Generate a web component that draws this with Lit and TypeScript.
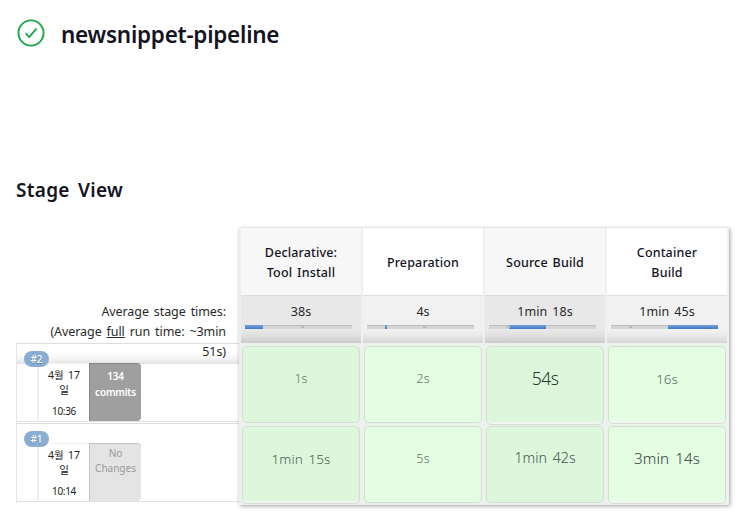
import { LitElement, html, css } from "lit";
import { customElement, property } from "lit/decorators.js";

interface Cell { text: string; size: number; ink: string; dy: number; ls: number; tall?: number }
interface Stage { name: string[]; avg: string; start: number; width: number; tick: number }
interface Run { id: string; time: string; changes: string[]; none?: boolean; cells: Cell[] }

const stages: Stage[] = [
  { name: ["Declarative:", "Tool Install"], avg: "38s", start: 0, width: 18, tick: 56 },
  { name: ["Preparation"], avg: "4s", start: 18, width: 2, tick: 56 },
  { name: ["Source Build"], avg: "1min 18s", start: 20, width: 37, tick: 18 },
  { name: ["Container", "Build"], avg: "1min 45s", start: 57, width: 50, tick: 18 },
];

const runs: Run[] = [
  {
    id: "#2", time: "10:36", changes: ["134", "commits"],
    cells: [
      { text: "1s", size: 12.5, ink: "#5d7160", dy: 0, ls: 0 },
      { text: "2s", size: 12.5, ink: "#5d7160", dy: 0, ls: 0.2 },
      { text: "54s", size: 17.5, ink: "#2c352f", dy: -1, ls: -0.5, tall: 2 },
      { text: "16s", size: 13.5, ink: "#586c5b", dy: 0, ls: 0, tall: 1 },
    ],
  },
  {
    id: "#1", time: "10:14", changes: ["No", "Changes"], none: true,
    cells: [
      { text: "1min 15s", size: 13.5, ink: "#4a5b4d", dy: 0, ls: 0.1, tall: 1 },
      { text: "5s", size: 12.5, ink: "#5d7160", dy: 0, ls: 0.2 },
      { text: "1min 42s", size: 14.2, ink: "#435446", dy: -1, ls: 0 },
      { text: "3min 14s", size: 15.2, ink: "#303c33", dy: -1, ls: 0.1, tall: 1 },
    ],
  },
];

@customElement("status-icon")
class StatusIcon extends LitElement {
  static styles = css`:host { display: block; width: 28px; height: 28px } svg { display: block }`;
  render() {
    return html`<svg width="28" height="28" viewBox="0 0 28 28" fill="none" stroke="#1ea64b" stroke-width="1.9" stroke-linecap="round" stroke-linejoin="round">
      <circle cx="14" cy="14" r="12.6"></circle>
      <path d="M9.2 14.8l3 3.3 6.8-8"></path>
    </svg>`;
  }
}

@customElement("run-summary")
class RunSummary extends LitElement {
  @property({ attribute: false }) run!: Run;
  static styles = css`
    :host { display: block; position: relative; height: 80px; box-sizing: border-box; border-top: 1px solid #ddd; border-left: 1px solid #e4e4e4 }
    .body { display: flex; height: 59px; box-sizing: border-box; margin-top: 19px; padding-left: 20px; border-bottom: 1px solid #e2e2e2 }
    .date { width: 52px; box-sizing: border-box; border-left: 2px solid #eee; border-top: 1px solid #f1f1f1; text-align: center; font-size: 10.5px; line-height: 15px; color: #222; padding-top: 4px; background: #fff }
    .date p { margin: 0; white-space: nowrap; word-spacing: 1.5px }
    .date .time { margin-top: 6px; letter-spacing: -0.3px; font-size: 10px }
    .changes { width: 52px; box-sizing: border-box; border-radius: 0 4px 4px 0; background: #9f9f9f; border: solid #868686; border-width: 1px 0 0 1px; color: #fff; font-size: 10px; font-weight: 600; line-height: 16px; text-align: center; padding-top: 4px; letter-spacing: -0.2px }
    .changes p { margin: 0 }
    .none { background: #e4e4e4; border-color: #c2c2c2; color: #999; font-weight: 400; line-height: 15px; padding-top: 2px; letter-spacing: 0 }
    .badge { position: absolute; left: 7px; top: 7px; width: 25px; height: 16px; border-radius: 8px; background: #8aadd3; color: #fff; font-size: 10px; line-height: 17px; font-weight: 500; text-align: center; text-shadow: 0 1px 1px #5d7da0 }
  `;
  render() {
    const r = this.run;
    return html`<div class="body">
        <div class="date"><p>4월 17</p><p>일</p><p class="time">${r.time}</p></div>
        <div class="changes ${r.none ? "none" : ""}">${r.changes.map((c) => html`<p>${c}</p>`)}</div>
      </div>
      <div class="badge">${r.id}</div>`;
  }
}

@customElement("app-root")
class AppRoot extends LitElement {
  static styles = css`
    :host { display: block; height: 511px; overflow: hidden; background: #fff; color: #14141f; padding: 0 22px 0 16px; box-sizing: border-box; font-family: "Noto Sans", "Noto Sans CJK KR", sans-serif }
    header { display: flex; align-items: center; gap: 16px; height: 68px; padding-left: 1px; box-sizing: border-box }
    header status-icon { margin-top: -2px }
    h1 { margin: 2px 0 0; font-size: 22.5px; line-height: 30px; font-weight: 600; letter-spacing: -0.26px; white-space: nowrap }
    h2 { margin: 106px 0 0; height: 54px; font-size: 19px; line-height: 32px; font-weight: 600; letter-spacing: 0.3px; word-spacing: 3px }
    .view { display: flex }
    .side { width: 223px; padding-top: 68px }
    .average { height: 68px; box-sizing: border-box; margin-bottom: -21px; padding: 6px 13px 0 0; text-align: right; font-size: 12.5px; line-height: 20.2px; letter-spacing: -0.08px; word-spacing: 1.8px; color: #2a2a2a; background: linear-gradient(#fff 56px, #f4f4f4 63px, #e2e2e2); white-space: nowrap }
    .average p { margin: 0 }
    .grid { display: flex; position: relative; width: 490px; height: 277px; box-sizing: border-box; padding-left: 2px; background: #eee; box-shadow: 1px 1px 4px rgba(0,0,0,.38); gap: 1px }
    .col { width: 121px; background: #e9f3e9; border-right: 1px solid #f1f1f1; box-sizing: border-box }
    .name { height: 68px; display: flex; flex-direction: column; justify-content: center; align-items: center; background: #fff; box-sizing: border-box; padding-top: 3px; font-size: 12.5px; line-height: 20px; font-weight: 500; letter-spacing: 0.15px; word-spacing: 1.5px; border-bottom: 1px solid #ddd; white-space: nowrap }
    .avg { height: 47px; box-sizing: border-box; padding: 6px 10px 0 4px; background: linear-gradient(#f1f1f1 34px, #e8e8e8 40px, #d6d6d6); font-size: 12.5px; line-height: 20px; text-align: center; color: #2a2a2a; word-spacing: 2px }
    .avg span { display: block; padding-left: 6px }
    .bar { display: flex; position: relative; height: 4px; margin-top: 3px; width: 107px; background: #d5d5d5; border-top: 1px solid #bebebe; box-sizing: border-box }
    .fill { height: 4px; margin-top: -1px; background: linear-gradient(#76a2dc, #4379c5) }
    .tick { position: absolute; top: 0; width: 3px; height: 2px; background: #bcbcbc }
    .odd .name { background: #f7f7f7 }
    .odd .avg { background: linear-gradient(#e8e8e8 34px, #dfdfdf 40px, #cbcbcb) }
    .slot { height: 80px; padding: 3px 1px 0 1px; box-sizing: border-box }
    .stage { height: 77px; box-sizing: border-box; border: 1px solid #d5ddd5; border-radius: 5px; background: #e3fee3; display: flex; justify-content: center; line-height: 20px; font-weight: 300; word-spacing: 2px; white-space: nowrap }
    .odd .stage { background: #ddf7dd }
    .col .lit { box-shadow: inset 0 -2px 0 #f1f5f1 }
  `;
  render() {
    return html`
      <header><status-icon></status-icon><h1>newsnippet-pipeline</h1></header>
      <h2>Stage View</h2>
      <div class="view">
        <div class="side">
          <div class="average"><p>Average stage times:</p><p>(Average <u>full</u> run time: ~3min</p><p>51s)</p></div>
          ${runs.map((r) => html`<run-summary .run=${r}></run-summary>`)}
        </div>
        <div class="grid">
          ${stages.map((s, i) => html`<div class="col ${i % 2 ? "" : "odd"}">
            <div class="name">${s.name.map((n) => html`<span>${n}</span>`)}</div>
            <div class="avg"><span>${s.avg}</span>
              <div class="bar"><i class="fill" style="margin-left:${s.start}px;width:${s.width}px"></i><i class="tick" style="left:${s.tick}px"></i></div>
            </div>
            ${runs.map(({ cells }) => {
              const c = cells[i];
              return html`<div class="slot"><div class="stage ${c.tall ? "lit" : ""}" style="height:${77 + (c.tall ?? 0)}px;padding-top:${22 + c.dy}px;font-size:${c.size}px;color:${c.ink};letter-spacing:${c.ls}px">${c.text}</div></div>`;
            })}
          </div>`)}
        </div>
      </div>`;
  }
}
